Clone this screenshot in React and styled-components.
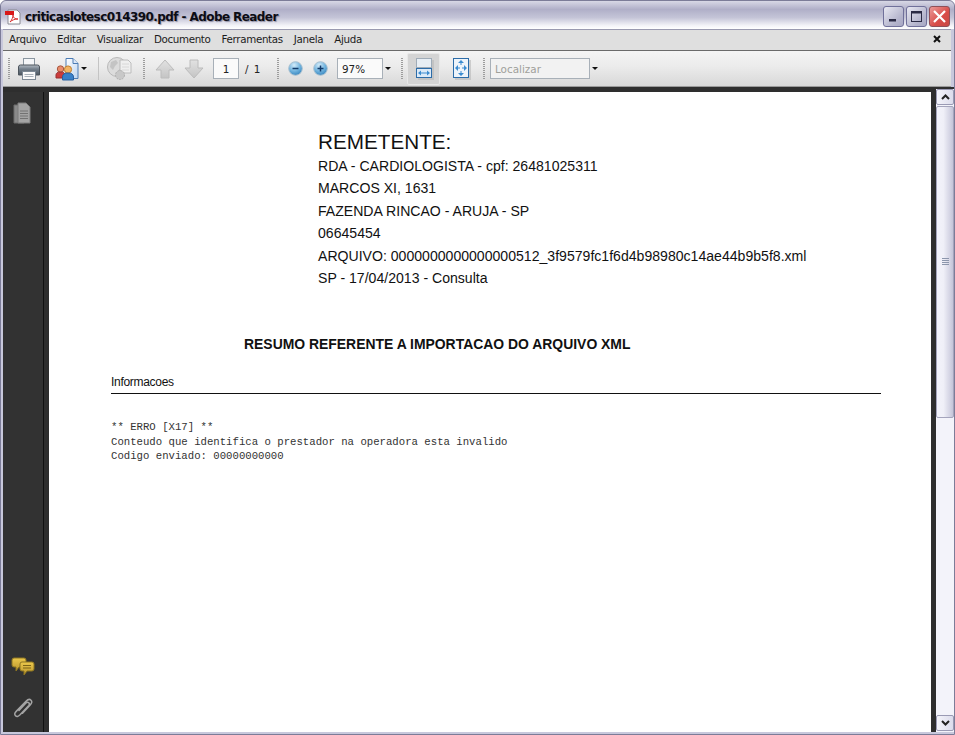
import styled, { createGlobalStyle } from "styled-components";

const Global = createGlobalStyle`
  html, body { margin: 0; padding: 0; overflow: hidden; background: #fff; }
  * { box-sizing: border-box; }
`;

const Win = styled.div`
  width: 955px;
  height: 735px;
  display: flex;
  flex-direction: column;
  padding: 2px 3px 2px 2px;
  border: 1px solid #7c7c98;
  border-radius: 6px 6px 0 0;
  background: #c8c8dc;
  font-family: "Open Sans", "Liberation Sans", sans-serif;
`;

const TitleBar = styled.div`
  height: 28px;
  flex: none;
  margin: -2px -3px 0 -2px;
  padding: 3px 4px 0 4px;
  display: flex;
  align-items: center;
  background: linear-gradient(#d8d8e6 0%, #b0afc8 30%, #c5c5d8 60%, #f4f4f8 88%, #fff 100%);
  border-radius: 6px 6px 0 0;
`;

const TitleText = styled.span`
  margin-left: 4px;
  font: bold 12px "DejaVu Sans", sans-serif;
  letter-spacing: -0.58px;
  color: #0c0c14;
  text-shadow: 1px 1px 1px #8f8fa4;
  flex: 1;
  white-space: nowrap;
`;

const WinButtons = styled.div`
  display: flex;
  gap: 2px;
`;

const WinButton = styled.div`
  width: 21px;
  height: 21px;
  border: 1px solid ${(p) => (p.$close ? "#8f5058" : "#70709a")};
  border-radius: 3px;
  background: ${(p) =>
    p.$close
      ? "linear-gradient(135deg, #eb9a98, #d84c48 60%, #c84844)"
      : "linear-gradient(135deg, #e8e8f2, #b4b4cc 70%, #a8a8c4)"};
  display: flex;
  align-items: center;
  justify-content: center;
`;

const MenuBar = styled.div`
  height: 21px;
  flex: none;
  border-top: 1px solid #9a9ab0;
  background: #dfdfdf;
  display: flex;
  align-items: center;
  padding: 0 6px 2px 6px;
  gap: 11px;
`;

const MenuItem = styled.span`
  font: 10.3px "DejaVu Sans", sans-serif;
  letter-spacing: -0.33px;
  color: #1c1c1c;
`;

const MenuClose = styled.span`
  margin-left: auto;
  margin-right: 4px;
  display: flex;
`;

const ToolBar = styled.div`
  height: 37px;
  flex: none;
  border-top: 1px solid #6a6a6a;
  border-bottom: 1px solid #9a9a9a;
  background: linear-gradient(#f4f4f4, #ebebeb 45%, #d8d8d8);
  display: flex;
  align-items: center;
  padding-left: 5px;
`;

const Grip = styled.i`
  width: 2px;
  height: 22px;
  margin-left: ${(p) => p.$ml || 0}px;
  background: repeating-linear-gradient(#9c9c9c 0 1px, transparent 1px 2px);
`;

const Sep = styled.i`
  width: 1px;
  height: 23px;
  margin-left: ${(p) => p.$ml || 0}px;
  background: #c4c4c4;
`;

const Tool = styled.div`
  margin-left: ${(p) => p.$ml || 0}px;
  display: flex;
  align-items: center;
  justify-content: center;
  flex: none;
  width: ${(p) => p.$w}px;
  height: ${(p) => p.$h || 24}px;
`;

const ActiveTool = styled(Tool)`
  padding-left: 2px;
  background: #d4d4d4;
  border: 1px solid #e8e8e8;
  border-radius: 2px;
`;

const Caret = styled.i`
  width: 0;
  height: 0;
  flex: none;
  margin-left: ${(p) => p.$ml || 0}px;
  border-left: 3px solid transparent;
  border-right: 3px solid transparent;
  border-top: 3px solid #111;
`;

const Field = styled.div`
  flex: none;
  margin-left: ${(p) => p.$ml || 0}px;
  width: ${(p) => p.$w}px;
  height: 21px;
  border: 1px solid #a8b0b8;
  background: ${(p) => (p.$muted ? "#f2f2f2" : "#fafafa")};
  color: ${(p) => (p.$muted ? "#a0a09a" : "#222")};
  font: 10.4px "DejaVu Sans", sans-serif;
  display: flex;
  align-items: center;
  justify-content: ${(p) => (p.$center ? "center" : "flex-start")};
  padding-left: ${(p) => (p.$center ? 0 : 4)}px;
`;

const PageCount = styled.span`
  margin-left: 6px;
  flex: none;
  width: 22px;
  font: 10.4px "DejaVu Sans", sans-serif;
  color: #222;
  word-spacing: 2px;
`;

const Body = styled.div`
  flex: 1;
  min-height: 0;
  display: flex;
  background: #2e2e2e;
`;

const SideBar = styled.div`
  width: 41px;
  flex: none;
  margin-top: 5px;
  border-right: 1px solid #111;
  background: #323232;
  display: flex;
  flex-direction: column;
  align-items: center;
  padding: 10px 0 13px;
`;

const SideGap = styled.div`
  flex: 1;
`;

const SideIcon = styled.div`
  display: flex;
  margin-top: ${(p) => p.$mt || 0}px;
  margin-left: ${(p) => p.$ml || 0}px;
`;

const Viewer = styled.div`
  flex: 1;
  min-width: 0;
  margin-left: 5px;
  display: flex;
`;

const Paper = styled.div`
  width: 882px;
  flex: none;
  margin-top: 5px;
  background: #fff;
  padding: 37px 50px 0 62px;
  color: #111;
  font-family: "Liberation Sans", Arial, sans-serif;
`;

const Sender = styled.div`
  margin-left: 207px;
  font-size: 14.08px;
  line-height: 22.4px;
  white-space: nowrap;
`;

const SenderTitle = styled.div`
  font-size: 20.7px;
  line-height: 25px;
  margin-bottom: 1px;
`;

const Heading = styled.div`
  margin: 45.5px 0 0 133px;
  font-size: 13.93px;
  font-weight: bold;
  line-height: 18px;
  white-space: nowrap;
`;

const SectionLabel = styled.div`
  margin-top: 20px;
  padding-top: 2px;
  font-size: 12px;
  letter-spacing: -0.3px;
  line-height: 14px;
  border-bottom: 1px solid #111;
  height: 21px;
`;

const Mono = styled.pre`
  margin: 26.5px 0 0;
  font: 10.67px/14.5px "Liberation Mono", "Courier New", monospace;
  color: #333;
`;

const ScrollBar = styled.div`
  width: 18px;
  margin-left: 5px;
  flex: none;
  padding-top: 2px;
  background: linear-gradient(#2e2e2e 2px, #f3f3fa 2px);
  display: flex;
  flex-direction: column;
`;

const ScrollBtn = styled.div`
  height: 16px;
  flex: none;
  margin-bottom: 1px;
  border: 1px solid #9a9ab4;
  border-radius: 2px;
  background: linear-gradient(90deg, #f4f4fa, #dcdcec);
  display: flex;
  align-items: center;
  justify-content: center;
`;

const Thumb = styled.div`
  height: 312px;
  flex: none;
  border: 1px solid #a4a4bc;
  border-radius: 2px;
  background: linear-gradient(90deg, #f2f2fa 0%, #f0f0f8 40%, #d4d4e4 80%, #c4c4d8);
  display: flex;
  align-items: center;
  justify-content: center;
`;

const Track = styled.div`
  flex: 1;
`;

const PdfIcon = () => (
  <svg width="16" height="16" viewBox="0 0 16 16">
    <path d="M3 1h9l3 3v11H3z" fill="#fff" stroke="#8a8a92" />
    <rect x="0" y="2" width="9" height="4" fill="#d81818" />
    <path d="M5 13c2-2 3-5 3-7 0 3 2 4 5 4-3 0-6 1-8 3z" fill="none" stroke="#d83030" />
  </svg>
);

const PrintIcon = () => (
  <svg width="24" height="24" viewBox="0 0 24 24">
    <defs>
      <linearGradient id="printBody" x1="0" y1="0" x2="0" y2="1">
        <stop offset="0" stopColor="#b4bcc4" />
        <stop offset="0.4" stopColor="#74808c" />
        <stop offset="1" stopColor="#4c5660" />
      </linearGradient>
    </defs>
    <rect x="6.5" y="1.5" width="11" height="8" fill="#f4f6f8" stroke="#8a96a0" />
    <path d="M1.5 10q0-2 2-2h17q2 0 2 2v8h-21z" fill="url(#printBody)" stroke="#4c545c" />
    <rect x="5.5" y="14.5" width="13" height="8" fill="#fafafa" stroke="#7c8894" />
    <path d="M7.5 17.5h9M7.5 19.5h9" stroke="#a8b0b8" />
  </svg>
);

const ShareIcon = () => (
  <svg width="26" height="24" viewBox="0 0 26 24">
    <defs>
      <linearGradient id="sharePage" x1="0" y1="0" x2="1" y2="1">
        <stop offset="0" stopColor="#fff" />
        <stop offset="1" stopColor="#bcd4f0" />
      </linearGradient>
    </defs>
    <path d="M11 1.5h7l5 5v15H11z" fill="url(#sharePage)" stroke="#4c7cb4" />
    <path d="M18 1.5v5h5" fill="#dce8f8" stroke="#4c7cb4" />
    <circle cx="5.5" cy="12" r="3.2" fill="#e88c6c" stroke="#a85840" />
    <path d="M1 21v-3q0-3 4.5-3t4.500 3v3z" fill="#cc3c3c" stroke="#983030" />
    <circle cx="13" cy="12.5" r="3.6" fill="#f2b464" stroke="#c08030" />
    <path d="M7.5 23v-3q0-4 5.500-4t5.500 4v3z" fill="#3880c8" stroke="#2860a0" />
  </svg>
);

const GlobeIcon = () => (
  <svg width="26" height="26" viewBox="0 0 26 26">
    <circle cx="11" cy="11" r="9.5" fill="#dcdcdc" stroke="#b8b8b8" />
    <path d="M5 6l5-2 2 3-3 3-2 4-3-3zM13 13l4 1-2 5-2-2z" fill="#c4c4c4" />
    <path d="M14 4h8l3 3v10H14z" fill="#efefef" stroke="#bcbcbc" />
    <path d="M16 8h7M16 11h7M16 14h7" stroke="#d8d8d8" />
    <circle cx="14" cy="19" r="4.5" fill="#c8c8c8" stroke="#b0b0b0" strokeDasharray="2 1" />
  </svg>
);

const ArrowIcon = ({ down }) => (
  <svg width="20" height="20" viewBox="0 0 20 20">
    <defs>
      <linearGradient id={down ? "arrDown" : "arrUp"} x1="0" y1="0" x2="0" y2="1">
        <stop offset="0" stopColor="#e2e2e2" />
        <stop offset="1" stopColor="#c4c4c4" />
      </linearGradient>
    </defs>
    <path
      d={down ? "M6 1h8v8h5l-9 10-9-10h5z" : "M10 1l9 10h-5v8H6v-8H1z"}
      fill={`url(#${down ? "arrDown" : "arrUp"})`}
      stroke="#bcbcbc"
    />
  </svg>
);

const ZoomIcon = ({ plus }) => (
  <svg width="15" height="15" viewBox="0 0 15 15">
    <defs>
      <radialGradient id={plus ? "zp" : "zm"} cx="40%" cy="25%" r="85%">
        <stop offset="0" stopColor="#d4ecfa" />
        <stop offset="0.55" stopColor="#6cb0dc" />
        <stop offset="1" stopColor="#2c7cb8" />
      </radialGradient>
    </defs>
    <circle cx="7.5" cy="7.5" r="6.8" fill={`url(#${plus ? "zp" : "zm"})`} stroke="#a8c0d0" />
    <path d={plus ? "M4.5 7.5h6M7.5 4.5v6" : "M4.5 7.5h6"} stroke="#123c6c" strokeWidth="1.5" />
  </svg>
);

const FitWidthIcon = () => (
  <svg width="18" height="22" viewBox="0 0 18 22">
    <rect x="2" y="2" width="16" height="20" fill="#b8b8b8" opacity="0.6" />
    <rect x="0.5" y="0.5" width="15" height="9" fill="#e8eef4" stroke="#a0acb8" />
    <rect x="0.5" y="10.5" width="15" height="9" fill="#dceaf8" stroke="#2c6ca8" />
    <path d="M3 15h10" stroke="#3c8cd0" />
    <path d="M2 15l3-2.5v5zM14 15l-3-2.5v5z" fill="#3c8cd0" />
  </svg>
);

const FitPageIcon = () => (
  <svg width="18" height="22" viewBox="0 0 18 22">
    <rect x="2" y="2" width="16" height="20" fill="#b8b8b8" opacity="0.6" />
    <rect x="0.5" y="0.5" width="15" height="19" fill="#eef4fa" stroke="#2c6ca8" />
    <path d="M8 2l-3 3h6zM8 18l-3-3h6zM2 10l3-3v6zM14 10l-3-3v6z" fill="#3c8cd0" />
    <path d="M8 4v3M8 13v3M4 10h3M9 10h3" stroke="#3c8cd0" />
  </svg>
);

const PagesIcon = () => (
  <svg width="18" height="22" viewBox="0 0 18 22">
    <path d="M1 3h10v18H1z" fill="#8a8a8a" stroke="#6c6c6c" />
    <path d="M5 1h8l4 4v16H5z" fill="#a4a4a4" stroke="#7c7c7c" />
    <path d="M7 9h8M7 11.5h8M7 14h8M7 16.5h8" stroke="#727272" />
  </svg>
);

const CommentIcon = () => (
  <svg width="24" height="20" viewBox="0 0 24 20">
    <defs>
      <linearGradient id="bubble" x1="0" y1="0" x2="0" y2="1">
        <stop offset="0" stopColor="#ecc84c" />
        <stop offset="1" stopColor="#b8942c" />
      </linearGradient>
    </defs>
    <path d="M3 1h10q2 0 2 2v5q0 2-2 2H8l-3 4v-4H3q-2 0-2-2V3q0-2 2-2z" fill="url(#bubble)" stroke="#8c7420" />
    <path d="M11 5h10q2 0 2 2v5q0 2-2 2h-5l-3 4v-4h-2q-2 0-2-2V7q0-2 2-2z" fill="url(#bubble)" stroke="#8c7420" />
    <path d="M12 8.5h8M12 11h8" stroke="#7c6418" />
  </svg>
);

const ClipIcon = () => (
  <svg width="22" height="22" viewBox="0 0 22 22">
    <path
      d="M7 13.5l7-7.5q1.5-1.5 2.8-.3t0 2.8l-9 9.5q-2.5 2.5-4.3.7t.7-4.3l9.800-10.200q3-3 5-1t-1 5l-7.500 8"
      fill="none"
      stroke="#a4a4a4"
      strokeWidth="1.5"
      strokeLinecap="round"
    />
  </svg>
);

const menus = ["Arquivo", "Editar", "Visualizar", "Documento", "Ferramentas", "Janela", "Ajuda"];

export default function App() {
  return (
    <>
      <Global />
      <Win>
        <TitleBar>
          <PdfIcon />
          <TitleText>criticaslotesc014390.pdf - Adobe Reader</TitleText>
          <WinButtons>
            <WinButton>
              <svg width="13" height="13" viewBox="0 0 13 13">
                <rect x="2" y="9" width="7" height="2.5" fill="#2a2a44" />
              </svg>
            </WinButton>
            <WinButton>
              <svg width="13" height="13" viewBox="0 0 13 13">
                <rect x="1.5" y="1.5" width="10" height="10" fill="none" stroke="#2a2a44" />
                <path d="M1.5 2.5h10" stroke="#2a2a44" strokeWidth="2" />
              </svg>
            </WinButton>
            <WinButton $close>
              <svg width="15" height="15" viewBox="0 0 15 15">
                <path d="M2 2l11 11M13 2L2 13" stroke="#fff" strokeWidth="2.2" />
              </svg>
            </WinButton>
          </WinButtons>
        </TitleBar>
        <MenuBar>
          {menus.map((m) => (
            <MenuItem key={m}>{m}</MenuItem>
          ))}
          <MenuClose>
            <svg width="8" height="8" viewBox="0 0 8 8">
              <path d="M1 1l6 6M7 1L1 7" stroke="#111" strokeWidth="2" />
            </svg>
          </MenuClose>
        </MenuBar>
        <ToolBar>
          <Grip />
          <Tool $ml={7} $w={24}>
            <PrintIcon />
          </Tool>
          <Tool $ml={14} $w={26}>
            <ShareIcon />
          </Tool>
          <Caret $ml={0} />
          <Sep $ml={11} />
          <Tool $ml={7} $w={26} $h={26}>
            <GlobeIcon />
          </Tool>
          <Grip $ml={11} />
          <Tool $ml={10} $w={20}>
            <ArrowIcon />
          </Tool>
          <Tool $ml={9} $w={20}>
            <ArrowIcon down />
          </Tool>
          <Field $ml={9} $w={26} $center>1</Field>
          <PageCount>/ 1</PageCount>
          <Grip $ml={10} />
          <Tool $ml={9} $w={15}>
            <ZoomIcon />
          </Tool>
          <Tool $ml={10} $w={15}>
            <ZoomIcon plus />
          </Tool>
          <Field $ml={9} $w={46}>97%</Field>
          <Caret $ml={2} />
          <Grip $ml={10} />
          <ActiveTool $ml={4} $w={33} $h={32}>
            <FitWidthIcon />
          </ActiveTool>
          <Tool $ml={13} $w={18}>
            <FitPageIcon />
          </Tool>
          <Grip $ml={12} />
          <Field $ml={5} $w={100} $muted>Localizar</Field>
          <Caret $ml={2} />
        </ToolBar>
        <Body>
          <SideBar>
            <SideIcon $ml={-2}>
              <PagesIcon />
            </SideIcon>
            <SideGap />
            <SideIcon>
              <CommentIcon />
            </SideIcon>
            <SideIcon $mt={20}>
              <ClipIcon />
            </SideIcon>
          </SideBar>
          <Viewer>
            <Paper>
              <Sender>
                <SenderTitle>REMETENTE:</SenderTitle>
                <div>RDA - CARDIOLOGISTA - cpf: 26481025311</div>
                <div>MARCOS XI, 1631</div>
                <div>FAZENDA RINCAO - ARUJA - SP</div>
                <div>06645454</div>
                <div>ARQUIVO: 0000000000000000512_3f9579fc1f6d4b98980c14ae44b9b5f8.xml</div>
                <div>SP - 17/04/2013 - Consulta</div>
              </Sender>
              <Heading>RESUMO REFERENTE A IMPORTACAO DO ARQUIVO XML</Heading>
              <SectionLabel>Informacoes</SectionLabel>
              <Mono>{`** ERRO [X17] **
Conteudo que identifica o prestador na operadora esta invalido
Codigo enviado: 00000000000`}</Mono>
            </Paper>
            <ScrollBar>
              <ScrollBtn>
                <svg width="9" height="6" viewBox="0 0 9 6">
                  <path d="M1 5l3.5-3.5L8 5" fill="none" stroke="#222" strokeWidth="2" />
                </svg>
              </ScrollBtn>
              <Thumb>
                <svg width="7" height="8" viewBox="0 0 7 8">
                  <path d="M0 .5h7M0 2.5h7M0 4.5h7M0 6.5h7" stroke="#8c96ac" />
                </svg>
              </Thumb>
              <Track />
              <ScrollBtn>
                <svg width="9" height="6" viewBox="0 0 9 6">
                  <path d="M1 1l3.5 3.5L8 1" fill="none" stroke="#222" strokeWidth="2" />
                </svg>
              </ScrollBtn>
            </ScrollBar>
          </Viewer>
        </Body>
      </Win>
    </>
  );
}
